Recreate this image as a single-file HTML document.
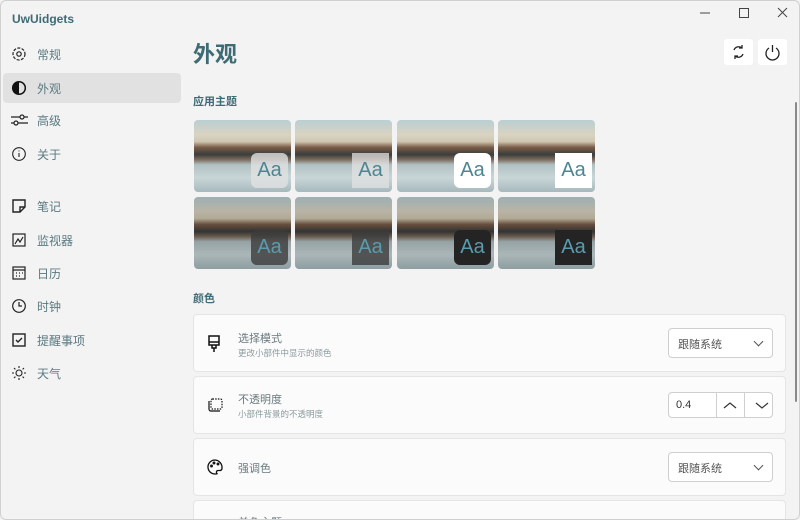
<!DOCTYPE html>
<html><head><meta charset="utf-8"><style>
*{box-sizing:border-box;margin:0;padding:0}
body{width:800px;height:520px;overflow:hidden;background:#f3f3f3;font-family:"Liberation Sans","Noto Sans CJK SC",sans-serif;position:relative;color:#222}
.win{position:absolute;inset:0;overflow:hidden;background:#f3f3f3}
.frame{position:absolute;inset:0;border:1px solid #d0d0d0;border-radius:6px;pointer-events:none}
.title{position:absolute;left:12px;top:12px;font-size:12px;font-weight:bold;color:#3e6b74}
.nav{position:absolute;left:3px;width:178px;height:30px;display:flex;align-items:center;font-size:12px;color:#5a7a80}
.nav svg{position:absolute;left:8px}
.nav span{position:absolute;left:34px}
.nav.sel{background:#e1e1e1;border-radius:4px}
h1{position:absolute;left:193px;top:37px;font-size:22px;font-weight:bold;color:#3e6b74}
.h2{position:absolute;left:193px;font-size:11px;font-weight:bold;color:#3e6b74}
.tile{position:absolute;width:97px;height:72px;border-radius:4px;overflow:hidden;
background:linear-gradient(180deg,#b9cfd3 0%,#d9d3c2 20%,#cfc7b0 30%,#7a5c48 38%,#3a3d3c 48%,#7d6b5c 55%,#b0c0c2 62%,#c9d6d8 80%,#a6b9bd 100%)}
.tile.d{filter:brightness(.85)}
.aa{position:absolute;left:57px;top:33px;width:37px;height:35px;display:flex;align-items:center;justify-content:center;font-size:20px;color:#4e8594}
.card{position:absolute;left:193px;width:593px;height:58px;background:#fbfbfb;border:1px solid #e5e5e5;border-radius:4px}
.card .ic{position:absolute;left:12px;top:19px}
.t1{position:absolute;left:44px;font-size:11px;color:#6a7a7e}
.t2{position:absolute;left:44px;font-size:8.5px;color:#8a9a9e}
.sel2{position:absolute;left:474px;top:13px;width:105px;height:30px;border:1px solid #cfcfcf;border-radius:4px;background:#fff;font-size:11px;color:#555;padding:7px 0 0 9px}
.sel2:after{content:"";position:absolute;right:10px;top:9px;width:6px;height:6px;border-right:1px solid #555;border-bottom:1px solid #555;transform:rotate(45deg)}
.btn{position:absolute;top:39px;width:29px;height:26px;background:#fff;border-radius:3px}
</style></head><body><div class="win">
<div class="title">UwUidgets</div>
<svg style="position:absolute;left:700px;top:6px" width="96" height="14" stroke="#444" fill="none" stroke-width="1">
<line x1="0" y1="7" x2="10" y2="7"/><rect x="39.5" y="2.5" width="9" height="9"/><path d="M78 2l9 9M87 2l-9 9"/></svg>
<div class="btn" style="left:724px"><svg width="29" height="26" fill="none" stroke="#222" stroke-width="1.3"><path d="M10 11a5 5 0 0 1 8-2M19 15a5 5 0 0 1-8 2"/><path d="M18 6v3h-3M11 20v-3h3"/></svg></div>
<div class="btn" style="left:758px"><svg width="29" height="26" fill="none" stroke="#222" stroke-width="1.3"><path d="M11 9a6.5 6.5 0 1 0 7 0"/><line x1="14.5" y1="6" x2="14.5" y2="13"/></svg></div>

<div class="nav" style="top:39px"><svg width="16" height="16" fill="none" stroke="#222" stroke-width="1.2"><circle cx="8" cy="8" r="2.2"/><circle cx="8" cy="8" r="6" stroke-dasharray="3 1.4"/></svg><span>常规</span></div>
<div class="nav sel" style="top:73px"><svg width="16" height="16"><circle cx="8" cy="8" r="6.3" fill="none" stroke="#111" stroke-width="1.5"/><path d="M8 1.7a6.3 6.3 0 0 0 0 12.6z" fill="#111"/></svg><span>外观</span></div>
<div class="nav" style="top:105px"><svg width="17" height="16" fill="none" stroke="#222" stroke-width="1.2"><path d="M0 5h17M0 11h17"/><circle cx="11" cy="5" r="2" fill="#f3f3f3"/><circle cx="5" cy="11" r="2" fill="#f3f3f3"/></svg><span>高级</span></div>
<div class="nav" style="top:139px"><svg width="16" height="16" fill="none" stroke="#222" stroke-width="1.1"><circle cx="8" cy="8" r="6.3"/><path d="M8 7v4M8 4.5v.9"/></svg><span>关于</span></div>
<div class="nav" style="top:191px"><svg width="16" height="16" fill="none" stroke="#222" stroke-width="1.4"><path d="M2 2h12v7l-5 5H2z"/><path d="M14 9H9v5"/></svg><span>笔记</span></div>
<div class="nav" style="top:225px"><svg width="16" height="16" fill="none" stroke="#222" stroke-width="1.2"><rect x="2" y="2" width="12" height="12"/><path d="M4 12l3-5 2 3 3-5"/></svg><span>监视器</span></div>
<div class="nav" style="top:258px"><svg width="16" height="16" fill="none" stroke="#222" stroke-width="1.2"><rect x="2" y="2" width="12" height="12"/><path d="M2 5h12M5 8h1M8 8h1M11 8h1M5 11h1M8 11h1"/></svg><span>日历</span></div>
<div class="nav" style="top:291px"><svg width="16" height="16" fill="none" stroke="#222" stroke-width="1.2"><circle cx="8" cy="8" r="6.3"/><path d="M8 4v4h3"/></svg><span>时钟</span></div>
<div class="nav" style="top:325px"><svg width="16" height="16" fill="none" stroke="#222" stroke-width="1.4"><rect x="2" y="2" width="12" height="12"/><path d="M5 8l2 2 4-4"/></svg><span>提醒事项</span></div>
<div class="nav" style="top:358px"><svg width="16" height="16" fill="none" stroke="#222" stroke-width="1.1"><circle cx="8" cy="8" r="3"/><path d="M8 1v2M8 13v2M1 8h2M13 8h2M3 3l1.4 1.4M11.6 11.6L13 13M3 13l1.4-1.4M11.6 4.4L13 3"/></svg><span>天气</span></div>

<h1>外观</h1>
<div class="h2" style="top:93px">应用主题</div>
<div class="tile" style="left:194px;top:120px"><div class="aa" style="background:rgba(225,225,225,.8);border-radius:6px">Aa</div></div>
<div class="tile" style="left:295px;top:120px"><div class="aa" style="background:rgba(225,225,225,.75)">Aa</div></div>
<div class="tile" style="left:397px;top:120px"><div class="aa" style="background:#fff;border-radius:6px">Aa</div></div>
<div class="tile" style="left:498px;top:120px"><div class="aa" style="background:#fff">Aa</div></div>
<div class="tile d" style="left:194px;top:197px"><div class="aa" style="background:rgba(70,70,70,.8);border-radius:6px;color:#6ab7cc">Aa</div></div>
<div class="tile d" style="left:295px;top:197px"><div class="aa" style="background:rgba(70,70,70,.8);color:#6ab7cc">Aa</div></div>
<div class="tile d" style="left:397px;top:197px"><div class="aa" style="background:#2a2a2a;border-radius:6px;color:#6ab7cc">Aa</div></div>
<div class="tile d" style="left:498px;top:197px"><div class="aa" style="background:#2a2a2a;color:#6ab7cc">Aa</div></div>

<div class="h2" style="top:290px">颜色</div>
<div class="card" style="top:314px"><svg class="ic" width="16" height="20" fill="none" stroke="#111" stroke-width="1.5"><path d="M3 2h10v9H3zM3 8h10M6 11v3h4v-3M8 14v4"/></svg>
<div class="t1" style="top:15px">选择模式</div><div class="t2" style="top:32px">更改小部件中显示的颜色</div><div class="sel2">跟随系统</div></div>
<div class="card" style="top:376px"><svg class="ic" width="18" height="18" fill="none" stroke="#111" stroke-width="1.2"><path d="M3 5v8a2 2 0 0 0 2 2h9"/><rect x="5" y="3" width="11" height="10" rx="1.5" stroke-dasharray="1.5 1.2"/></svg>
<div class="t1" style="top:14px">不透明度</div><div class="t2" style="top:31px">小部件背景的不透明度</div>
<div style="position:absolute;left:474px;top:15px;width:105px;height:26px;border:1px solid #cfcfcf;border-radius:4px;background:#fff;font-size:11px;color:#333;padding:6px 0 0 7px">0.4
<div style="position:absolute;left:47px;top:0;width:1px;height:24px;background:#cfcfcf"></div><div style="position:absolute;left:75px;top:0;width:1px;height:24px;background:#cfcfcf"></div>
<svg style="position:absolute;left:54px;top:8px" width="46" height="10" fill="none" stroke="#333" stroke-width="1.2"><path d="M1 7l6-5 6 5M33 2l6 5 6-5"/></svg></div></div>
<div class="card" style="top:438px"><svg class="ic" width="18" height="18" fill="none" stroke="#111" stroke-width="1.3"><path d="M9 2a7 7 0 1 0 2 13.7c-1-1.2-.8-3 1-3.2h2.5A2.5 2.5 0 0 0 16 10 7.5 7.5 0 0 0 9 2z"/><circle cx="5.5" cy="8" r=".8"/><circle cx="8" cy="5" r=".8"/><circle cx="12" cy="6" r=".8"/></svg>
<div class="t1" style="top:21px">强调色</div><div class="sel2">跟随系统</div></div>
<div class="card" style="top:500px;height:40px"><div class="t1" style="top:13px">单色主题</div></div>
<div style="position:absolute;left:795px;top:102px;width:2px;height:300px;background:#8a8a8a;border-radius:1px"></div>
<div class="frame"></div>
</div></body></html>
